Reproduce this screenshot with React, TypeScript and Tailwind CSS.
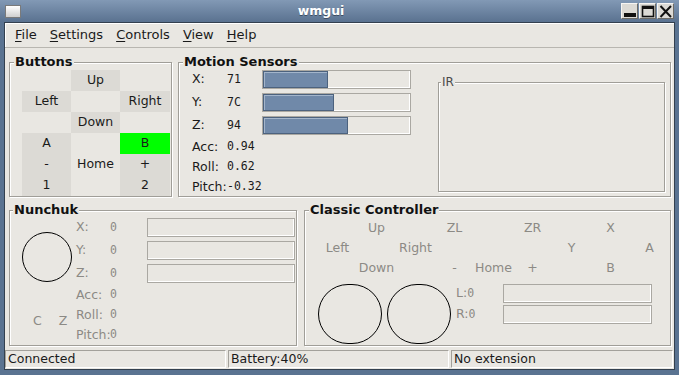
import type { ReactNode } from 'react';

function Frame({
  label,
  className = '',
  labelClass = 'left-[4px] top-[-9px] text-[13px] font-bold text-[#111]',
  children,
}: {
  label: string;
  className?: string;
  labelClass?: string;
  children?: ReactNode;
}) {
  return (
    <div
      className={`relative shrink-0 border border-[#a09e98] shadow-[inset_1px_1px_0_#fff,1px_1px_0_#fff] ${className}`}
    >
      <span className={`absolute bg-[#e9e7e2] px-[1px] leading-[16px] ${labelClass}`}>{label}</span>
      {children}
    </div>
  );
}

function Bar({ value, className }: { value: number; className: string }) {
  return (
    <div
      className={`h-[19px] border border-[#aaa8a2] bg-[#e9e7e2] shadow-[inset_-1px_-1px_0_#fff] ${className}`}
    >
      {value > 0 && (
        <div
          className="h-full border border-[#4c627e] bg-[#7089a9] shadow-[inset_1px_1px_0_#a3b5cb]"
          style={{ width: `${(value / 255) * 100}%` }}
        />
      )}
    </div>
  );
}

const mono = "font-['DejaVu_Sans_Mono',monospace] text-[11.5px]";

function TitleBar() {
  return (
    <div className="flex h-[22px] shrink-0 items-center bg-gradient-to-b from-[#8299b5] to-[#5a7290] pl-[5px] pr-[5px]">
      <span className="h-[13px] w-[16px] border border-[#7a7a7a] bg-gradient-to-b from-white to-[#cfcfcf]" />
      <span className="flex-1 pt-[1px] text-center text-[12.5px] font-bold text-white [text-shadow:0_1px_0_#3d4d61]">
        wmgui
      </span>
      <div className="flex gap-[1px]">
        <span className="flex h-[16px] w-[17px] items-center justify-center border border-t-[#f6f5f3] border-l-[#f6f5f3] border-r-[#6d6b66] border-b-[#6d6b66] bg-[#dcdad5]">
          <svg width="15" height="14" viewBox="0 0 15 14">
            <rect x="2" y="9" width="12" height="4" fill="#111" />
          </svg>
        </span>
        <span className="flex h-[16px] w-[17px] items-center justify-center border border-t-[#f6f5f3] border-l-[#f6f5f3] border-r-[#6d6b66] border-b-[#6d6b66] bg-[#dcdad5]">
          <svg width="15" height="14" viewBox="0 0 15 14">
            <rect x="2.5" y="2.5" width="11" height="10" fill="none" stroke="#111" strokeWidth="1.6" />
            <rect x="2" y="2" width="12" height="3" fill="#111" />
          </svg>
        </span>
        <span className="flex h-[16px] w-[17px] items-center justify-center border border-t-[#f6f5f3] border-l-[#f6f5f3] border-r-[#6d6b66] border-b-[#6d6b66] bg-[#dcdad5]">
          <svg width="15" height="14" viewBox="0 0 15 14">
            <path d="M2.5 2 L13 13 M13 2 L2.5 13" stroke="#111" strokeWidth="2" />
          </svg>
        </span>
      </div>
    </div>
  );
}

function MenuBar() {
  const items = ['File', 'Settings', 'Controls', 'View', 'Help'];
  return (
    <div className="flex h-[25px] shrink-0 items-center gap-[13px] border-b border-[#b8b6b0] pl-[10px] text-[13px] shadow-[inset_1px_1px_0_#fff]">
      {items.map((m) => (
        <span key={m}>
          <span className="underline underline-offset-[2px]">{m[0]}</span>
          {m.slice(1)}
        </span>
      ))}
    </div>
  );
}

const buttonCells: { text: string; shade: boolean; green?: boolean }[] = [
  { text: '', shade: false },
  { text: 'Up', shade: true },
  { text: '', shade: false },
  { text: 'Left', shade: true },
  { text: '', shade: false },
  { text: 'Right', shade: true },
  { text: '', shade: false },
  { text: 'Down', shade: true },
  { text: '', shade: false },
  { text: 'A', shade: true },
  { text: '', shade: false },
  { text: 'B', shade: true, green: true },
  { text: '-', shade: true },
  { text: 'Home', shade: false },
  { text: '+', shade: true },
  { text: '1', shade: true },
  { text: '', shade: false },
  { text: '2', shade: true },
];

function ButtonsFrame() {
  return (
    <Frame label="Buttons" className="h-[135px] w-[163px] pl-[12px] pt-[7px]">
      <div className="grid grid-cols-[49px_49px_50px] grid-rows-[repeat(6,21px)]">
        {buttonCells.map((c, i) => (
          <div
            key={i}
            className={`flex items-center justify-center ${
              c.green ? 'bg-[#00ff00]' : c.shade ? 'bg-[#dcdad5]' : ''
            }`}
          >
            {c.text}
          </div>
        ))}
      </div>
    </Frame>
  );
}

function MotionFrame() {
  const axes = [
    { l: 'X:', v: '71' },
    { l: 'Y:', v: '7C' },
    { l: 'Z:', v: '94' },
  ];
  const extra = [
    { l: 'Acc:', v: '0.94' },
    { l: 'Roll:', v: '0.62' },
    { l: 'Pitch:', v: '-0.32' },
  ];
  return (
    <Frame label="Motion Sensors" className="flex h-[135px] w-[493px] items-start pl-[13px] pt-[7px]">
      <div className="flex w-[219px] flex-col">
        <div className="flex flex-col gap-[4px]">
          {axes.map((a) => (
            <div key={a.l} className="grid grid-cols-[35px_35px_149px] items-center">
              <span>{a.l}</span>
              <span className={mono}>{a.v}</span>
              <Bar value={parseInt(a.v, 16)} className="w-[149px]" />
            </div>
          ))}
        </div>
        <div className="mt-[2px] flex flex-col">
          {extra.map((e) => (
            <div key={e.l} className="grid h-[20px] grid-cols-[35px_auto] items-center">
              <span>{e.l}</span>
              <span className={mono}>{e.v}</span>
            </div>
          ))}
        </div>
      </div>
      <Frame
        label="IR"
        className="ml-[27px] mt-[12px] h-[110px] w-[227px]"
        labelClass="left-[2px] top-[-9px] text-[12px] text-[#4a4a4a]"
      />
    </Frame>
  );
}

function NunchukFrame() {
  const axes = ['X:', 'Y:', 'Z:'];
  const extra = ['Acc:', 'Roll:', 'Pitch:'];
  return (
    <Frame
      label="Nunchuk"
      className="flex h-[136px] w-[288px] text-[#8c8a85]"
      labelClass="left-[3px] top-[-9px] text-[13px] font-bold text-[#111]"
    >
      <div className="flex w-[66px] shrink-0 flex-col">
        <div className="ml-[12px] mt-[21px] h-[50px] w-[50px] rounded-full border border-black" />
        <div className="mt-[31px] flex h-[16px] items-center gap-[17px] pl-[23px]">
          <span>C</span>
          <span>Z</span>
        </div>
      </div>
      <div className="flex flex-col pt-[7px]">
        <div className="flex flex-col gap-[4px]">
          {axes.map((a) => (
            <div key={a} className="grid grid-cols-[34px_37px_148px] items-center">
              <span>{a}</span>
              <span className={mono}>0</span>
              <Bar value={0} className="w-[148px]" />
            </div>
          ))}
        </div>
        <div className="mt-[2px] flex flex-col">
          {extra.map((e) => (
            <div key={e} className="grid h-[20px] grid-cols-[34px_auto] items-center">
              <span>{e}</span>
              <span className={mono}>0</span>
            </div>
          ))}
        </div>
      </div>
    </Frame>
  );
}

const classicCells: [string, number, number][] = [
  ['Up', 2, 1],
  ['ZL', 4, 1],
  ['ZR', 6, 1],
  ['X', 8, 1],
  ['Left', 1, 2],
  ['Right', 3, 2],
  ['Y', 7, 2],
  ['A', 9, 2],
  ['Down', 2, 3],
  ['-', 4, 3],
  ['Home', 5, 3],
  ['+', 6, 3],
  ['B', 8, 3],
];

function ClassicFrame() {
  return (
    <Frame
      label="Classic Controller"
      className="h-[136px] w-[367px] pl-[13px] pt-[7px] text-[#8c8a85]"
      labelClass="left-[4px] top-[-9px] text-[13px] font-bold text-[#111]"
    >
      <div className="grid grid-cols-[repeat(9,39px)] grid-rows-[repeat(3,20px)]">
        {classicCells.map(([t, c, r]) => (
          <span
            key={t}
            className="flex items-center justify-center"
            style={{ gridColumn: c, gridRow: r }}
          >
            {t}
          </span>
        ))}
      </div>
      <div className="mt-[6px] flex items-start">
        <div className="h-[60px] w-[64px] rounded-full border border-black" />
        <div className="ml-[5px] h-[60px] w-[64px] rounded-full border border-black" />
        <div className="ml-[5px] flex flex-col gap-[2px]">
          {['L:', 'R:'].map((l) => (
            <div key={l} className="grid grid-cols-[47px_149px] items-center">
              <span>
                {l}
                <span className={mono}>0</span>
              </span>
              <Bar value={0} className="w-[149px]" />
            </div>
          ))}
        </div>
      </div>
    </Frame>
  );
}

function StatusBar() {
  const parts = ['Connected', 'Battery:40%', 'No extension'];
  return (
    <div className="flex h-[20px] shrink-0 items-center gap-[2px]">
      {parts.map((p, i) => (
        <div
          key={p}
          className={`flex h-[18px] items-center border border-t-[#a3a19b] border-l-[#a3a19b] border-r-[#fff] border-b-[#fff] pl-[2px] ${
            i === 2 ? 'w-[222px]' : 'w-[221px]'
          }`}
        >
          {p}
        </div>
      ))}
    </div>
  );
}

export default function App() {
  return (
    <div className="flex h-[375px] w-[679px] flex-col bg-[#5a7391] font-['DejaVu_Sans',sans-serif] text-[12.5px] text-[#1a1a1a]">
      <TitleBar />
      <div className="mx-[4px] flex h-[348px] flex-col border border-[#33404f] bg-[#e9e7e2]">
        <MenuBar />
        <main className="flex h-[301px] flex-col gap-[13px] pl-[4px] pt-[14px]">
          <div className="flex gap-[6px]">
            <ButtonsFrame />
            <MotionFrame />
          </div>
          <div className="flex gap-[7px]">
            <NunchukFrame />
            <ClassicFrame />
          </div>
        </main>
        <StatusBar />
      </div>
    </div>
  );
}
